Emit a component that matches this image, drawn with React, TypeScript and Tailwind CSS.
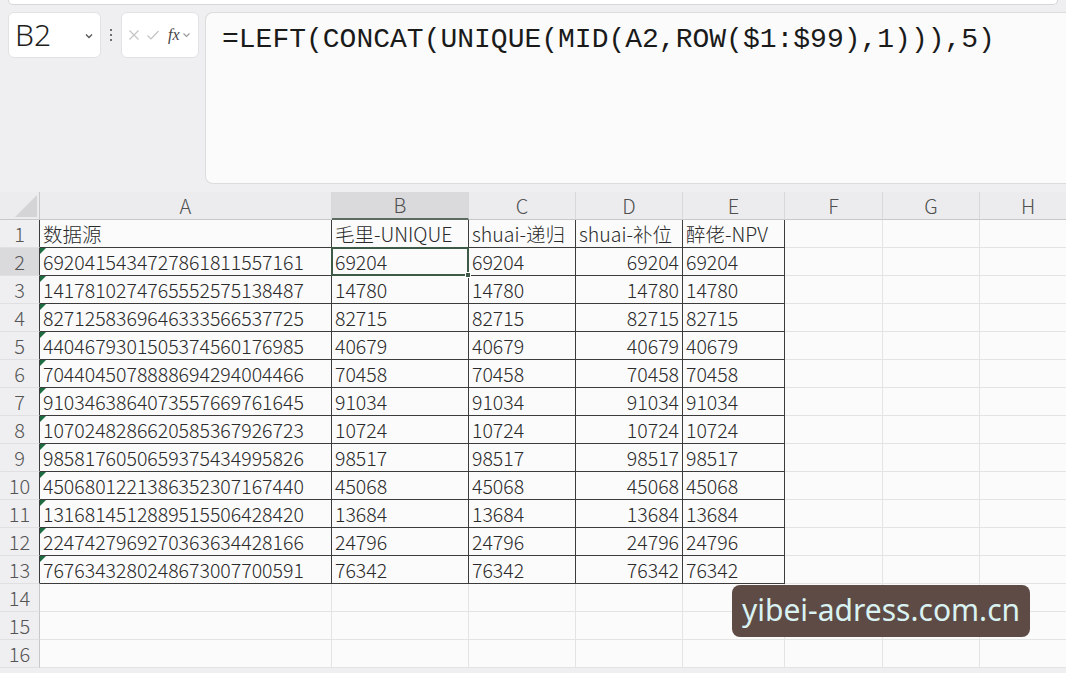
import React from 'react';

const COLS = ['A', 'B', 'C', 'D', 'E', 'F', 'G', 'H'];
const WIDTHS = 'grid-cols-[40px_292px_137px_107px_107px_102px_98px_97px_97px]';

const SOURCE = [
  '6920415434727861811557161',
  '1417810274765552575138487',
  '8271258369646333566537725',
  '4404679301505374560176985',
  '7044045078888694294004466',
  '9103463864073557669761645',
  '1070248286620585367926723',
  '9858176050659375434995826',
  '4506801221386352307167440',
  '1316814512889515506428420',
  '2247427969270363634428166',
  '7676343280248673007700591',
];

const HEADERS = ['数据源', '毛里-UNIQUE', 'shuai-递归', 'shuai-补位', '醉佬-NPV'];

const firstUnique = (s: string) => Array.from(new Set(s.split(''))).join('').slice(0, 5);

const cellFont = { fontFamily: '"Noto Sans CJK SC", "Noto Sans", sans-serif' };

function Cell({ row, col }: { row: number; col: number }) {
  const inTable = row <= 13 && col <= 4;
  let text = '';
  let right = false;
  if (row === 1 && col <= 4) text = HEADERS[col];
  if (row >= 2 && row <= 13) {
    const src = SOURCE[row - 2];
    if (col === 0) text = src;
    else if (col <= 4) text = firstUnique(src);
    if (col === 3) right = true;
  }
  return (
    <div
      className={`relative h-[28px] border-r border-b overflow-visible whitespace-nowrap text-[19.5px] font-light leading-[27px] text-[#2a2a2a] bg-[#fbfbfb] ${
        inTable ? 'border-[#3c3c3c]' : 'border-[#e4e4e4]'
      } ${right ? 'text-right pr-[3px]' : 'pl-[3px]'}`}
      style={cellFont}
    >
      {row >= 2 && row <= 13 && col === 0 && (
        <span className="absolute left-0 top-0 w-0 h-0 border-t-[6px] border-r-[6px] border-t-[#1d6b40] border-r-transparent" />
      )}
      {text}
      {row === 2 && col === 1 && (
        <span className="absolute -left-[1px] -top-[1px] -right-[1px] -bottom-[1px] border-2 border-[#3d5a47] z-10">
          <span className="absolute -right-[4px] -bottom-[4px] w-[6px] h-[6px] bg-[#3d5a47] border border-white" />
        </span>
      )}
    </div>
  );
}

export default function App() {
  const rows = Array.from({ length: 16 }, (_, i) => i + 1);
  return (
    <div className="relative w-[1066px] h-[673px] overflow-hidden bg-[#efeff1] flex flex-col" style={cellFont}>
      {/* ribbon edge */}
      <div className="h-[5px] mx-[8px] bg-white border-b border-x border-[#d6d6d8] rounded-b-md shrink-0" />

      {/* formula bar */}
      <div className="flex items-start gap-[6px] pl-[8px] pt-[7px] h-[187px] shrink-0">
        <div className="w-[93px] h-[46px] bg-white border border-[#e2e2e4] rounded-md flex items-center justify-between pl-[6px] pr-[6px]">
          <span className="text-[30px] font-light text-[#1f1f1f] leading-none" style={{ fontFamily: '"Noto Sans", sans-serif' }}>
            B2
          </span>
          <svg width="10" height="8" viewBox="0 0 10 8" className="mt-[2px]">
            <path d="M2 2.5 L5 5.5 L8 2.5" stroke="#555" strokeWidth="1.3" fill="none" />
          </svg>
        </div>
        <div className="w-[8px] h-[46px] flex flex-col items-center justify-center gap-[3px]">
          <span className="w-[2px] h-[2px] bg-[#444] rounded-full" />
          <span className="w-[2px] h-[2px] bg-[#444] rounded-full" />
          <span className="w-[2px] h-[2px] bg-[#444] rounded-full" />
        </div>
        <div className="w-[78px] h-[46px] bg-white border border-[#e2e2e4] rounded-md flex items-center pl-[6px] gap-[6px]">
          <svg width="12" height="12" viewBox="0 0 12 12">
            <path d="M1.5 1.5 L10.5 10.5 M10.5 1.5 L1.5 10.5" stroke="#c4c4c4" strokeWidth="1.2" />
          </svg>
          <svg width="14" height="12" viewBox="0 0 14 12">
            <path d="M1.5 6.5 L5 10 L12.5 2" stroke="#c4c4c4" strokeWidth="1.2" fill="none" />
          </svg>
          <span className="text-[16px] italic text-[#444] leading-none ml-[2px]" style={{ fontFamily: '"Liberation Serif", serif' }}>
            fx
          </span>
          <svg width="9" height="8" viewBox="0 0 9 8" className="-ml-[4px]">
            <path d="M1.5 2.5 L4.5 5.5 L7.5 2.5" stroke="#999" strokeWidth="1.1" fill="none" />
          </svg>
        </div>
        <div className="flex-1 h-[172px] bg-[#fbfbfb] border border-[#dcdcde] rounded-l-lg border-r-0 pl-[16px] pt-[6px]">
          <span className="text-[28px] text-[#1a1a1a] whitespace-nowrap" style={{ fontFamily: '"Liberation Mono", "DejaVu Sans Mono", monospace' }}>
            =LEFT(CONCAT(UNIQUE(MID(A2,ROW($1:$99),1))),5)
          </span>
        </div>
      </div>

      {/* sheet */}
      <div className={`grid ${WIDTHS} w-[1077px]`}>
        {/* column headers */}
        <div className="h-[28px] bg-[#ececee] border-b border-r border-[#c8c8ca] flex items-end justify-end pr-[2px] pb-[2px]">
          <span className="w-0 h-0 border-b-[22px] border-l-[22px] border-b-[#d4d4d6] border-l-transparent" />
        </div>
        {COLS.map((c, i) => (
          <div
            key={c}
            className={`h-[28px] flex items-center justify-center text-[20px] font-light leading-none text-[#505050] ${
              i === 1 ? 'bg-[#dadadc] border-b-2 border-b-[#5a6b60]' : 'bg-[#ececee] border-b border-b-[#c8c8ca]'
            } border-r border-r-[#d8d8da]`}
          >
            {c}
          </div>
        ))}

        {rows.map((r) => (
          <React.Fragment key={r}>
            <div
              className={`h-[28px] flex items-center justify-center text-[20px] font-light leading-none text-[#555] border-b border-[#e0e0e2] border-r ${
                r === 2 ? 'bg-[#dadadc]' : 'bg-[#efeff1]'
              } ${r <= 13 ? 'border-r-[#3c3c3c]' : 'border-r-[#c8c8ca]'}`}
            >
              {r}
            </div>
            {COLS.map((_, ci) => (
              <Cell key={ci} row={r} col={ci} />
            ))}
          </React.Fragment>
        ))}
      </div>

      {/* watermark */}
      <div className="absolute left-[732px] top-[585px] w-[298px] h-[52px] rounded-lg bg-[#5f4b45] flex items-center justify-center">
        <span className="text-[30px] text-[#d9f2f2] leading-none pb-[2px]" style={{ fontFamily: '"Noto Sans", sans-serif' }}>
          yibei-adress.com.cn
        </span>
      </div>
    </div>
  );
}
